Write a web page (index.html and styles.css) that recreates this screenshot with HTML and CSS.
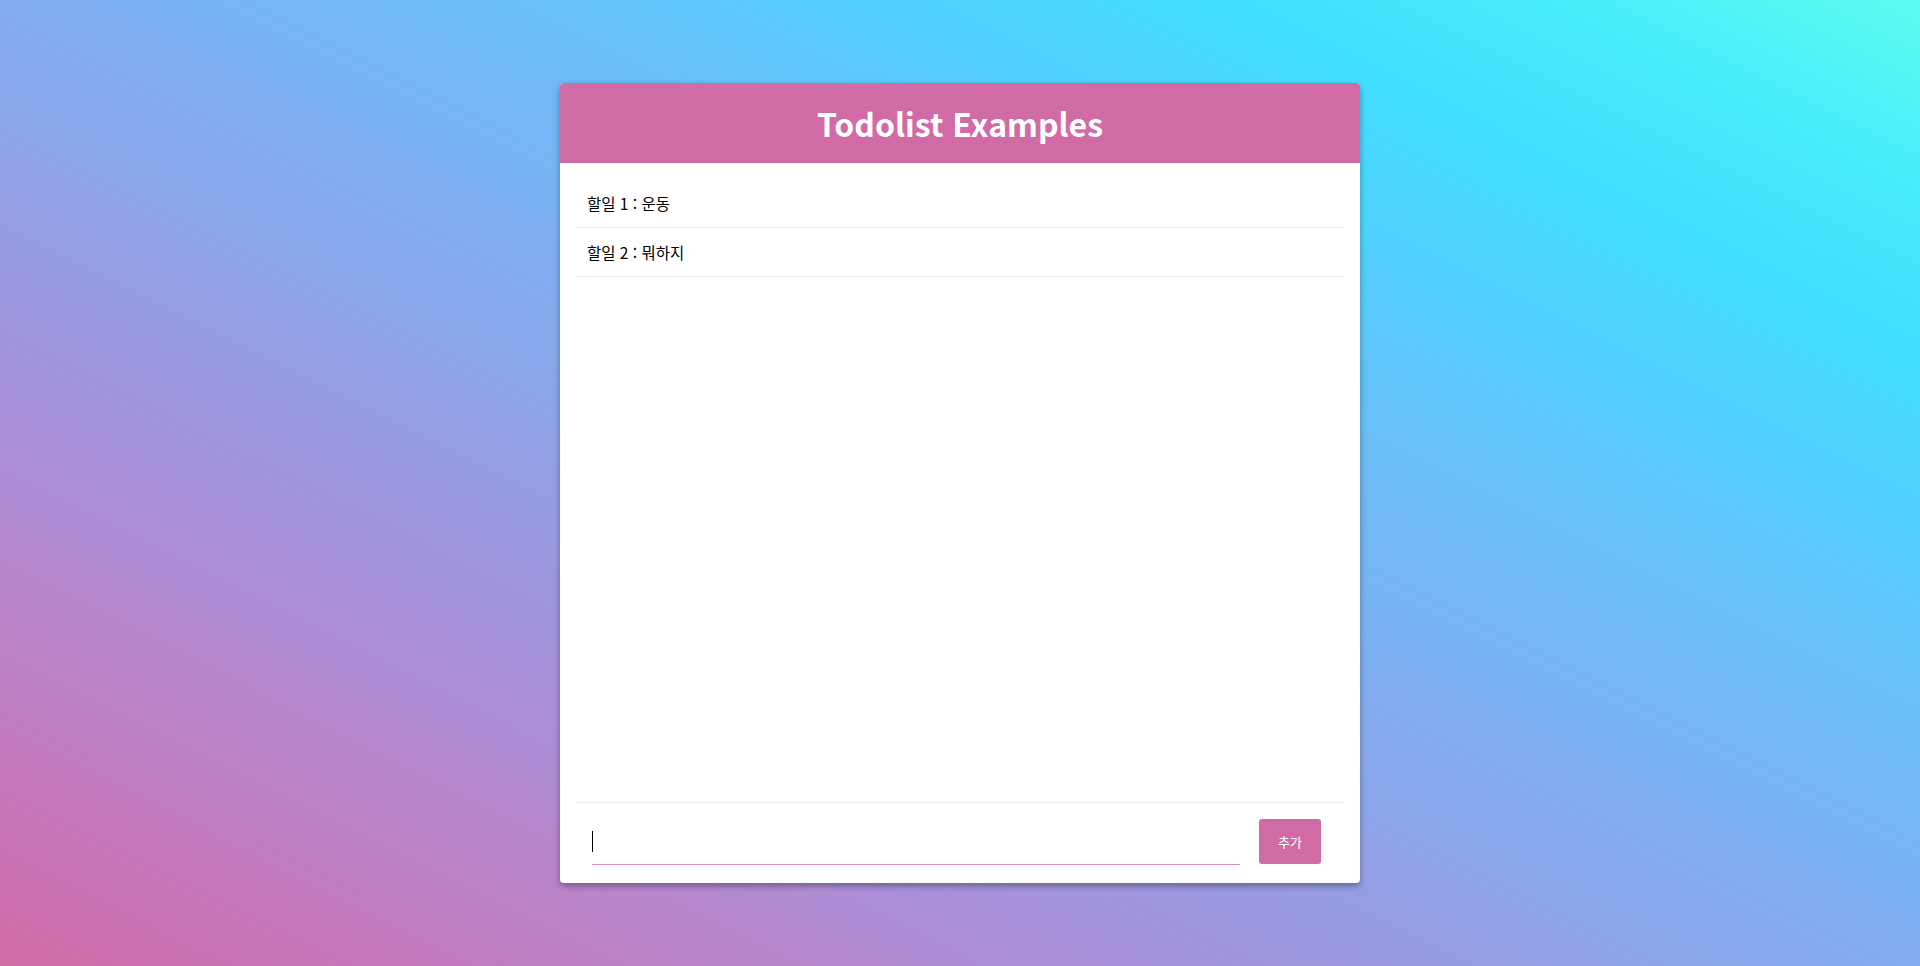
FILE: index.html
```html
<!DOCTYPE html>
<html lang="ko">
<head>
<meta charset="utf-8">
<title>Todolist Examples</title>
<link rel="stylesheet" href="styles.css">
</head>
<body>
<div class="page">
  <main class="card">
    <header class="card-header">
      <h1 class="title">Todolist Examples</h1>
    </header>
    <ul class="todo-list">
      <li class="todo-item">할일 1 : 운동</li>
      <li class="todo-item">할일 2 : 뭐하지</li>
    </ul>
    <form class="todo-form">
      <div class="input-wrap">
        <input class="todo-input" type="text" aria-label="할일 입력">
        <span class="fake-caret"></span>
      </div>
      <button class="add-btn" type="button">추가</button>
    </form>
  </main>
</div>
</body>
</html>
```
FILE: styles.css
```css
* { box-sizing: border-box; }
html, body { margin: 0; padding: 0; }
body {
  height: 966px;
  overflow: hidden;
  background: linear-gradient(to right top, #d16ba5, #c777b9, #ba83ca, #aa8fd8, #9a9ae1, #8aa7ec, #79b3f4, #69bff8, #52cffe, #41dfff, #46eefa, #5ffbf1);
  font-family: "Noto Sans CJK KR", "Noto Sans", sans-serif;
}
.page {
  display: flex;
  justify-content: center;
  padding-top: 83px;
}
.card {
  width: 800px;
  height: 800px;
  background: #fff;
  border-radius: 4px;
  box-shadow: 0 3px 6px rgba(0, 0, 0, 0.35);
  display: flex;
  flex-direction: column;
}
.card-header {
  height: 80px;
  background: #d16ba5;
  border-radius: 4px 4px 0 0;
  display: flex;
  align-items: center;
  justify-content: center;
}
.title {
  margin: 0;
  color: #fff;
  font-family: "Noto Sans CJK KR", "Noto Sans", sans-serif;
  font-weight: 700;
  font-size: 32px;
  line-height: 1;
}
.todo-list {
  list-style: none;
  margin: 0 16px;
  padding: 16px 0 0;
  flex: 1;
}
.todo-item {
  height: 49px;
  border-bottom: 1px solid #ececec;
  padding-left: 11px;
  display: flex;
  align-items: center;
  font-size: 15.5px;
  color: #000;
}
.todo-form {
  margin: 0 16px;
  border-top: 1px solid #ececec;
  padding: 16px 23px 18px 16px;
  display: flex;
  align-items: flex-end;
}
.input-wrap {
  position: relative;
  flex: 1;
  margin-right: 19px;
}
.todo-input {
  display: block;
  width: 100%;
  height: 46px;
  border: none;
  border-bottom: 1px solid rgba(209, 107, 165, 0.75);
  outline: none;
  padding: 0;
  font-size: 16px;
  background: transparent;
}
.fake-caret {
  position: absolute;
  left: 0;
  top: 12px;
  width: 1px;
  height: 21px;
  background: #000;
}
.add-btn {
  width: 62px;
  height: 45px;
  margin-bottom: 1px;
  border: none;
  border-radius: 3px;
  background: #d16ba5;
  color: #fff;
  font-family: "Noto Sans CJK KR", sans-serif;
  font-size: 13px;
  padding: 0;
  cursor: pointer;
}
```
